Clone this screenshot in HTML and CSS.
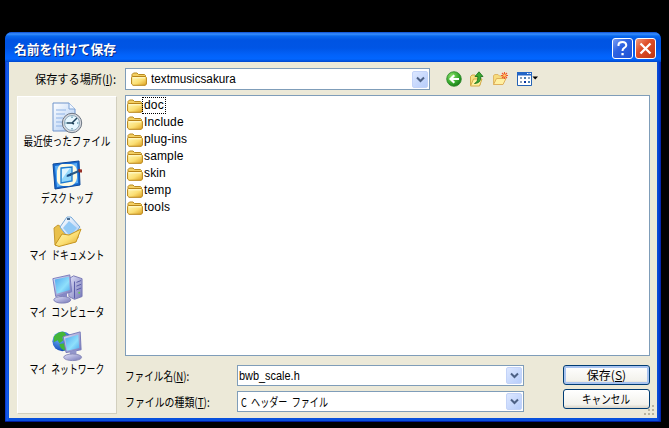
FILE: index.html
```
<!DOCTYPE html>
<html lang="ja">
<head>
<meta charset="utf-8">
<title>名前を付けて保存</title>
<link rel="stylesheet" href="styles.css">
</head>
<body>
<svg class="defs" width="0" height="0" aria-hidden="true">
  <defs>
    <linearGradient id="gold" x1="0" y1="0" x2="1" y2="1"><stop offset="0" stop-color="#fff8b8"/><stop offset=".55" stop-color="#fbdf74"/><stop offset="1" stop-color="#dca022"/></linearGradient>
    <linearGradient id="screen" x1="0" y1="0" x2="1" y2="1"><stop offset="0" stop-color="#4fa6ee"/><stop offset=".6" stop-color="#8fe0fb"/><stop offset="1" stop-color="#4ea8ec"/></linearGradient>
    <linearGradient id="paper" x1="0" y1="0" x2="1" y2="1"><stop offset="0" stop-color="#ffffff"/><stop offset="1" stop-color="#a9c9f4"/></linearGradient>
    <linearGradient id="metal" x1="0" y1="0" x2="1" y2="1"><stop offset="0" stop-color="#e2e3fa"/><stop offset="1" stop-color="#7577b8"/></linearGradient>
    <radialGradient id="green" cx=".35" cy=".3" r=".8"><stop offset="0" stop-color="#8be06a"/><stop offset=".6" stop-color="#35a82c"/><stop offset="1" stop-color="#137014"/></radialGradient>
    <radialGradient id="globe" cx=".35" cy=".3" r=".8"><stop offset="0" stop-color="#6fb8ff"/><stop offset="1" stop-color="#0c3fb0"/></radialGradient>
    <symbol id="folder" viewBox="0 0 16 14">
      <path d="M1 11.500V2.500L2.500 1H6L7.500 2.500H13.500L14.500 3.500V12" fill="#f3cf62" stroke="#b98b22"/>
      <path d="M.6 5.500L1.500 4.500H14.500L15.400 5.500V12L14.400 13.300H2L.6 12z" fill="url(#gold)" stroke="#b98518"/>
      <path d="M2 5.800H14" stroke="#fffbd0"/>
    </symbol>
    <symbol id="chevron" viewBox="0 0 9 7"><path d="M1 1.500L4.500 5L8 1.500" fill="none" stroke="#4d6185" stroke-width="2"/></symbol>
  </defs>
</svg>

<main class="dialog">
  <header class="titlebar">
    <h1 class="title"><span class="fit t-title">名前を付けて保存</span></h1>
    <button class="caption help"><svg width="19" height="19" viewBox="0 0 19 19"><path d="M5.500 7V5.500Q6 3 9.500 3T13.300 6.200Q13.300 8 11 9.200Q9.500 10.200 9.500 12" fill="none" stroke="#fff" stroke-width="2"/><path d="M8.400 14H10.700V16.300H8.400z" fill="#fff"/></svg></button>
    <button class="caption close"><svg width="19" height="19" viewBox="0 0 19 19"><path d="M4.500 4.500L14.500 14.500M14.500 4.500L4.500 14.500" stroke="#fff" stroke-width="2.300"/></svg></button>
  </header>

  <section class="client">
    <div class="lookin">
      <label class="look-label"><span class="fit t-look">保存する場所(<u>I</u>):</span></label>
      <div class="combo look-combo">
        <svg class="combo-icon" width="16" height="14"><use href="#folder"/></svg>
        <span class="fit t-path">textmusicsakura</span>
        <span class="drop"><svg width="9" height="7"><use href="#chevron"/></svg></span>
      </div>
      <nav class="tools">
        <svg width="16" height="16" viewBox="0 0 16 16"><circle cx="8" cy="8" r="7.300" fill="url(#green)" stroke="#2a8726" stroke-width=".8"/><path d="M13 8H5M8.300 4.200L4.500 8L8.300 11.800" fill="none" stroke="#fff" stroke-width="2.200"/></svg>
        <svg width="16" height="16" viewBox="0 0 16 16"><path d="M1.500 14V5.500L3 4H6L7 5.500H11V14z" fill="#f7df80" stroke="#d3ab4a"/><path d="M1.500 15L4.500 8H13L10.500 15z" fill="#fff0a0" stroke="#d3ab4a"/><path d="M5.500 12.500Q9.200 11 8.800 5.500H6L10 .8L14 5.500H11.800Q12.300 12 5.500 12.500z" fill="#3cab32" stroke="#176d18" stroke-width=".8"/></svg>
        <svg width="18" height="16" viewBox="0 0 18 16"><path d="M1.500 13.500V4.500L3 3.500H6L7.500 5H11.500V8" fill="#f7dc7d" stroke="#dfb765"/><path d="M1.500 13.500L4.500 7.500H14L11 13.500z" fill="#fff0a2" stroke="#dfb05b"/><path d="M12.500 1V8M9 4.500H16M10 2L15 7M15 2L10 7" stroke="#f05a28" stroke-width="1.100"/><circle cx="12.500" cy="4.500" r="1.300" fill="#ffd46a"/></svg>
        <svg width="22" height="16" viewBox="0 0 22 16"><path d="M.5 1.500H14.500V14.500H.5z" fill="#fff" stroke="#2463b4"/><path d="M0 1H15V4.500H0z" fill="#2266c6"/><path d="M10 2.500H11.500M12.500 2.500H14" stroke="#fff"/><path d="M3 6H5V8H3zM11 6H13V8H11zM3 10H5V12H3z" fill="#8ba0b8"/><path d="M7 6H9V8H7zM11 10H13V12H11z" fill="#477fb6"/><path d="M7 10H9V12H7z" fill="#0a36a0"/><path d="M15.500 5.500H21L18.200 8.500z" fill="#000"/></svg>
      </nav>
    </div>

    <div class="body">
      <aside class="places">
        <a class="place">
          <svg width="32" height="32" viewBox="0 0 32 32"><path d="M2 1H18L24 7V29H2z" fill="url(#paper)" stroke="#6e94cc"/><path d="M18 1V7H24" fill="#eef5ff" stroke="#7fa3d5"/><path d="M5 8H15M5 12H14M5 16H12M5 20H11M5 24H12" stroke="#91b4e5"/><circle cx="21" cy="21" r="9.700" fill="#d6d9df" stroke="#6c7582"/><circle cx="21" cy="21" r="7.500" fill="#e7f7ff" stroke="#8faabd"/><path d="M21 21L26 16M21 21H16M21 21L23 22" stroke="#21445c" stroke-width="1.500"/><path d="M21 14.500V16M21 26V27.500M14.500 21H16M26 21H27.500" stroke="#3b7b8e"/></svg>
          <span class="fit t-recent">最近使ったファイル</span>
        </a>
        <a class="place">
          <svg width="32" height="32" viewBox="0 0 32 32"><path d="M2 5L28 2L29 26L4 30z" fill="#176ad0" stroke="#0d4999"/><path d="M4 7L26 4L27 24L6 28z" fill="#60b1f5"/><path d="M11 5H20Q26 6 26 13V19Q25 26 18 27H12Q5 26 6 18V12Q7 6 11 5z" fill="#fffbe2"/><path d="M10 9L21 8V22L10 24z" fill="#92d7fb" stroke="#1d7bd0" stroke-width="1.300"/><path d="M11 10L19 9L11 20z" fill="#def4ff"/><path d="M16 17L28 12" stroke="#295986" stroke-width="2"/><path d="M27 10L31 10.500L31 13.500L28 13.500z" fill="#973027"/><path d="M15 17.500L20 14V17z" fill="#184d8b"/></svg>
          <span class="fit t-desktop">デスクトップ</span>
        </a>
        <a class="place">
          <svg width="32" height="32" viewBox="0 0 32 32"><path d="M4 29L3 12L7 9L12 12L27 11V22L8 29z" fill="#e9c04b" stroke="#c59a31"/><path d="M9 11L16 1H20L29 11L19 24z" fill="url(#paper)" stroke="#77a9d8"/><path d="M12 12L18 5L26 12L19 20z" fill="#91c9f6"/><path d="M16 3H19" stroke="#496b8e" stroke-width="2"/><path d="M4 29L11 18L18 19L30 13L25 26L8 30.500z" fill="url(#gold)" stroke="#c6951f"/></svg>
          <span class="fit t-docs">マイ ドキュメント</span>
        </a>
        <a class="place">
          <svg width="32" height="32" viewBox="0 0 34 32"><path d="M19 5L24 2L33 5V24L25 27L19 24z" fill="url(#metal)" stroke="#7878b4"/><path d="M25 8V26M27 9L32 7M27 13L32 11M27 17L32 15" stroke="#5558a4"/><circle cx="30" cy="20" r="1" fill="#62ce52"/><path d="M2 5L20 1L22 19L5 24z" fill="url(#metal)" stroke="#7679bc"/><path d="M4 6L19 3L20 17L6 21z" fill="url(#screen)"/><path d="M9 23L17 20V26H9z" fill="#8588c5"/><ellipse cx="12" cy="27.500" rx="9" ry="3.500" fill="url(#metal)" stroke="#7e80b7"/></svg>
          <span class="fit t-comp">マイ コンピュータ</span>
        </a>
        <a class="place">
          <svg width="32" height="32" viewBox="0 0 34 32"><circle cx="12" cy="11" r="10.500" fill="url(#globe)"/><path d="M3 6Q8 0 14 1L17 5L12 7L13 10L9 13L7 10L3 12zM9 14L15 13V21Q9 19 9 14z" fill="#43b639"/><path d="M13 6L31 1L32 20L16 23z" fill="url(#metal)" stroke="#7477b7"/><path d="M15 8L29 4L30 18L17 21z" fill="url(#screen)"/><path d="M20 22L27 20V27H20z" fill="#9295cb"/><ellipse cx="23" cy="28" rx="9.500" ry="3.500" fill="url(#metal)" stroke="#8789b8"/></svg>
          <span class="fit t-net">マイ ネットワーク</span>
        </a>
      </aside>

      <div class="main">
        <ul class="files">
          <li><svg width="16" height="14"><use href="#folder"/></svg><span class="name focused">doc</span></li>
          <li><svg width="16" height="14"><use href="#folder"/></svg><span class="name">Include</span></li>
          <li><svg width="16" height="14"><use href="#folder"/></svg><span class="name">plug-ins</span></li>
          <li><svg width="16" height="14"><use href="#folder"/></svg><span class="name">sample</span></li>
          <li><svg width="16" height="14"><use href="#folder"/></svg><span class="name">skin</span></li>
          <li><svg width="16" height="14"><use href="#folder"/></svg><span class="name">temp</span></li>
          <li><svg width="16" height="14"><use href="#folder"/></svg><span class="name">tools</span></li>
        </ul>
        <div class="form">
          <div class="fields">
            <label><span class="fit t-fname">ファイル名(<u>N</u>):</span></label>
            <div class="combo"><span class="fit t-file">bwb_scale.h</span><span class="drop"><svg width="9" height="7"><use href="#chevron"/></svg></span></div>
            <label><span class="fit t-ftype">ファイルの種類(<u>T</u>):</span></label>
            <div class="combo"><span class="fit t-type">C ヘッダー ファイル</span><span class="drop"><svg width="9" height="7"><use href="#chevron"/></svg></span></div>
          </div>
          <div class="actions">
            <button class="btn primary"><span class="fit t-save">保存(<u>S</u>)</span></button>
            <button class="btn"><span class="fit t-cancel">キャンセル</span></button>
          </div>
        </div>
      </div>
    </div>
    <i class="grip"></i>
  </section>
</main>
<script src="fit.js"></script>
</body>
</html>
```
FILE: styles.css
```
* { box-sizing: border-box; }
body {
  margin: 0;
  height: 428px;
  overflow: hidden;
  background: #000;
  color: #000;
  font: 12px/16px "Noto Sans CJK JP", sans-serif;
}
.defs { position: absolute; }
svg { display: block; flex: none; }
button { font: inherit; color: inherit; padding: 0; }

.dialog {
  width: 656px;
  height: 390px;
  margin: 32px 0 0 5px;
  padding: 0 4px 4px;
  background: linear-gradient(90deg, #0831c8, #1660ee 2px, #0850dc 4px, #0850dc 652px, #0640d0 654px, #001ea0);
  border-bottom: 1px solid #001b9c;
  border-radius: 7px 7px 0 0;
}
.titlebar {
  display: flex;
  align-items: center;
  gap: 2px;
  height: 30px;
  margin: 0 -4px;
  padding: 3px 5px 0 9px;
  border-radius: 7px 7px 0 0;
  background: linear-gradient(#0a4bce 0, #398fff 2px, #0969ee 4px, #0054e3 8px, #0055e5 16px, #0262fa 23px, #0266ff 27px, #0047cc 30px);
}
.title {
  flex: 1;
  margin: 0;
  color: #fff;
  font-size: 13px;
  font-weight: 700;
  line-height: 18px;
  text-shadow: 1px 1px #0a2a83;
}
.caption {
  width: 21px;
  height: 21px;
  border: 1px solid #fff;
  border-radius: 3px;
  display: grid;
  place-items: center;
}
.help { background: linear-gradient(135deg, #7b9ff5, #2e63e2 40%, #1d50d4); }
.close { background: linear-gradient(135deg, #f0987c, #df4f29 40%, #bf3615); }

.client {
  position: relative;
  height: 356px;
  padding: 6px 7px 4px 8px;
  background: #ece9d8;
}
.lookin { display: flex; align-items: center; height: 22px; }
.look-label { width: 108px; padding-left: 18px; }
.combo {
  display: flex;
  align-items: center;
  height: 21px;
  padding: 0 1px 0 3px;
  background: #fff;
  border: 1px solid #7f9db9;
}
.look-combo { width: 305px; height: 22px; padding-left: 5px; }
.combo-icon { margin-right: 4px; }
.drop {
  width: 16px;
  height: 17px;
  margin-left: auto;
  display: grid;
  place-items: center;
  flex: none;
  border-radius: 2px;
  background: linear-gradient(135deg, #dce7ff, #b7cdfb);
  border: 1px solid #c3d3f8;
}
.tools { display: flex; align-items: center; gap: 7px; margin: -1px 0 0 16px; }

.body { display: flex; gap: 8px; margin-top: 5px; }
.places {
  width: 100px;
  height: 318px;
  margin-top: 1px;
  padding-top: 5px;
  background: #f8f7f2;
  border: 1px solid #fff;
  border-right-color: #d2cfbe;
  border-bottom-color: #d2cfbe;
}
.place { display: flex; flex-direction: column; align-items: center; height: 57px; }
.place .fit { line-height: 14px; transform-origin: 50% 50%; word-spacing: 3px; }

.main { width: 525px; }
.files {
  height: 261px;
  margin: 0;
  padding: 1px;
  list-style: none;
  background: #fff;
  border: 1px solid #7f9db9;
}
.files li { display: flex; align-items: center; height: 17px; }
.name {
  padding: 0 1px;
  border: 1px solid transparent;
  margin-left: -1px;
  line-height: 15px;
  font-family: "Liberation Sans", sans-serif;
  font-size: 12px;
  letter-spacing: .15px;
}
.focused { border: 1px dotted #000; }

.form { display: flex; justify-content: space-between; margin-top: 9px; }
.fields {
  display: grid;
  grid-template-columns: 112px 287px;
  grid-template-rows: 21px 21px;
  row-gap: 5px;
  align-items: center;
}
.actions { display: grid; grid-template-rows: 20px 20px; gap: 4px; width: 87px; }
.btn {
  display: grid;
  place-items: center;
  border: 1px solid #003c74;
  border-radius: 3px;
  background: linear-gradient(#fff, #f3f2ec 80%, #d9d4c8);
}
.btn .fit { transform-origin: 50% 50%; margin-top: -1px; }
.primary { box-shadow: inset 0 0 0 2px #a9c4f0; }
.fit { display: block; width: max-content; white-space: pre; transform-origin: 0 50%; }
u { text-underline-offset: 1px; }

.grip {
  position: absolute;
  right: 1px;
  bottom: 1px;
  width: 12px;
  height: 12px;
  background: conic-gradient(from 270deg at 2px 2px, #b8b4a2 90deg, transparent 0) 0 0 / 4px 4px;
  clip-path: polygon(66% 0, 100% 0, 100% 100%, 0 100%, 0 66%, 33% 66%, 33% 33%, 66% 33%);
}

.t-title { --w: 102; }
.t-look { --w: 81; }
.t-path { --w: 85; }
.t-recent { --w: 87; }
.t-desktop { --w: 52; }
.t-docs { --w: 75; }
.t-comp { --w: 75; }
.t-net { --w: 75; }
.t-fname { --w: 64; }
.t-ftype { --w: 85; }
.t-file { --w: 61; }
.t-type { --w: 87; word-spacing: 3px; }
.t-save { --w: 39; }
.t-cancel { --w: 48; }
.t-path, .t-file { font-family: "Liberation Sans", sans-serif; }
.t-file { margin-left: -2px; }
```
FILE: fit.js
```
// Condense each label to its design width (--w, in pixels).
document.querySelectorAll('.fit').forEach(function (el) {
  var want = parseFloat(getComputedStyle(el).getPropertyValue('--w'));
  var have = el.offsetWidth;
  if (!want || !have) return;
  el.style.transform = 'scaleX(' + want / have + ')';
});
```
